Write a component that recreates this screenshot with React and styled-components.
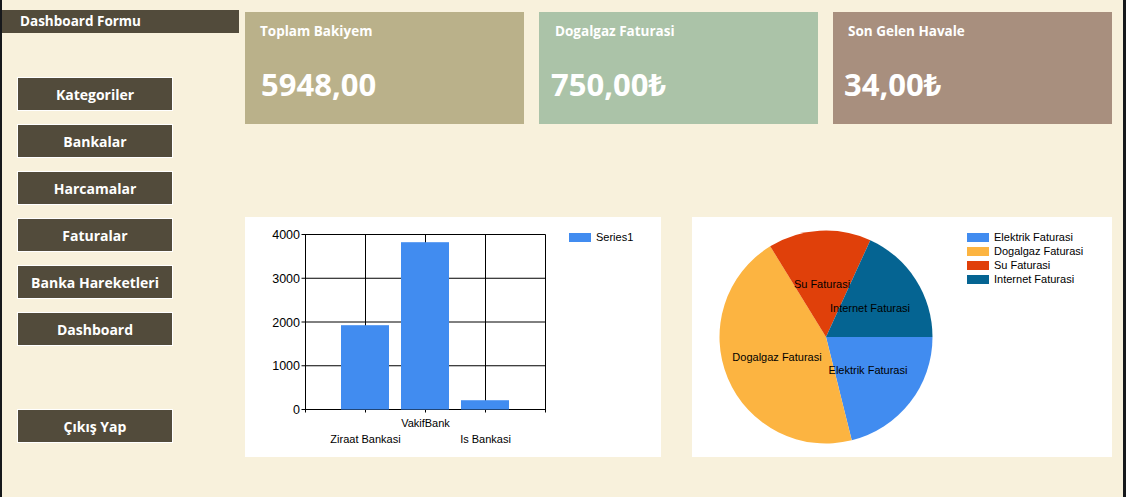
import React from "react";
import styled, { createGlobalStyle } from "styled-components";

const GlobalStyle = createGlobalStyle`
  body {
    margin: 0;
    background: #f8f1dc;
    font-family: "Open Sans", "Noto Sans", "DejaVu Sans", sans-serif;
  }
`;

const UI_FONT = `"Open Sans", "Noto Sans", "DejaVu Sans", sans-serif`;
const CHART_FONT = `"Liberation Sans", Arial, sans-serif`;

const BAR_BLUE = "#418cf0";

const Frame = styled.div`
  display: flex;
  width: 1126px;
  height: 497px;
  box-sizing: border-box;
  border-left: 2px solid #16181b;
  border-right: 3px solid #16181b;
  background: #f8f1dc;
  overflow: hidden;
`;

const Sidebar = styled.aside`
  width: 243px;
  flex-shrink: 0;
  padding-top: 10px;
  display: flex;
  flex-direction: column;
`;

const FormTitle = styled.div`
  width: 237px;
  height: 23px;
  box-sizing: border-box;
  padding-left: 18px;
  background: #524b3b;
  color: #fff;
  font: 700 13.5px/22px ${UI_FONT};
`;

const Menu = styled.nav`
  display: flex;
  flex-direction: column;
  align-items: flex-start;
  gap: 13px;
  margin: 44px 0 0 15px;
`;

const MenuButton = styled.button`
  width: 156px;
  height: 34px;
  margin: ${(p) => p.$extra || 0}px 0 0 0;
  border: 1px solid #fff;
  background: #524b3b;
  color: #fff;
  font: 700 14px ${UI_FONT};
  padding: 0;
  cursor: pointer;
`;

const Main = styled.main`
  flex: 1;
  padding-top: 12px;
  display: flex;
  flex-direction: column;
`;

const Cards = styled.section`
  display: grid;
  grid-template-columns: repeat(3, 279px);
  gap: 15px;
`;

const Card = styled.div`
  height: 112px;
  box-sizing: border-box;
  padding: 10px 0 0 15px;
  background: ${(p) => p.$bg};
  color: #fff;
`;

const CardTitle = styled.div`
  font: 700 13.5px/19px ${UI_FONT};
  padding-left: ${(p) => p.$shift || 0}px;
`;

const CardValue = styled.div`
  margin-top: 25px;
  margin-left: ${(p) => p.$shift || 0}px;
  font: 700 31px/37px ${UI_FONT};
`;

const Charts = styled.section`
  display: flex;
  gap: 31px;
  margin-top: 93px;
`;

const ChartPanel = styled.div`
  display: flex;
  width: ${(p) => p.$w}px;
  height: 240px;
  background: #fff;
  font-family: ${CHART_FONT};
`;

const Legend = styled.ul`
  list-style: none;
  margin: 0;
  padding: 13px 0 0 ${(p) => p.$pad}px;
  display: flex;
  flex-direction: column;
`;

const LegendItem = styled.li`
  display: flex;
  align-items: center;
  gap: 5px;
  height: 14px;
  font-size: 11px;
  color: #000;
  white-space: nowrap;
`;

const Swatch = styled.span`
  width: 22px;
  height: 9px;
  background: ${(p) => p.$color};
  flex-shrink: 0;
`;

const menu = [
  "Kategoriler",
  "Bankalar",
  "Harcamalar",
  "Faturalar",
  "Banka Hareketleri",
  "Dashboard",
];

const banks = [
  { name: "Ziraat Bankasi", value: 1927, row: 2 },
  { name: "VakifBank", value: 3824, row: 1 },
  { name: "Is Bankasi", value: 212, row: 2 },
];

const bills = [
  { name: "Elektrik Faturasi", color: "#418cf0", from: 0, to: 76, label: [176, 153] },
  { name: "Dogalgaz Faturasi", color: "#fcb441", from: 76, to: 238.4, label: [85, 140] },
  { name: "Su Faturasi", color: "#e0400a", from: 238.4, to: 294.6, label: [130, 67] },
  { name: "Internet Faturasi", color: "#056492", from: 294.6, to: 360, label: [178, 91] },
];

const BarChart = () => {
  const left = 60.5;
  const right = 300.5;
  const top = 17.5;
  const bottom = 192.5;
  const scale = (bottom - top) / 4000;
  const steps = [0, 1000, 2000, 3000, 4000];
  const cols = [120.5, 180.5, 240.5];
  return (
    <svg width="320" height="240" fontFamily={CHART_FONT}>
      {steps.map((s) => {
        const y = bottom - s * scale;
        return (
          <g key={s}>
            <line x1={left - 4} x2={right} y1={y} y2={y} stroke="#000" />
            <text x="55" y={y + 4.5} fontSize="12.5" textAnchor="end" fill="#000">
              {s}
            </text>
          </g>
        );
      })}
      {[left, ...cols, right].map((x) => (
        <line key={x} x1={x} x2={x} y1={top} y2={bottom + 3} stroke="#000" />
      ))}
      {banks.map((b, i) => {
        const h = b.value * scale;
        return (
          <rect key={b.name} x={cols[i] - 24.5} y={bottom - h} width="48" height={h} fill={BAR_BLUE} />
        );
      })}
      {banks.map((b, i) => (
        <text
          key={b.name}
          x={cols[i]}
          y={b.row === 1 ? 210 : 225.5}
          fontSize="11"
          textAnchor="middle"
          fill="#000"
        >
          {b.name}
        </text>
      ))}
    </svg>
  );
};

const polar = (cx, cy, r, deg) => {
  const a = (deg * Math.PI) / 180;
  return [cx + r * Math.cos(a), cy + r * Math.sin(a)];
};

const PieChart = () => {
  const cx = 134;
  const cy = 120;
  const r = 106.5;
  return (
    <svg width="270" height="240" fontFamily={CHART_FONT}>
      {bills.map((b) => {
        const [x1, y1] = polar(cx, cy, r, b.from);
        const [x2, y2] = polar(cx, cy, r, b.to);
        const large = b.to - b.from > 180 ? 1 : 0;
        return (
          <path
            key={b.name}
            d={`M${cx},${cy} L${x1},${y1} A${r},${r} 0 ${large} 1 ${x2},${y2} Z`}
            fill={b.color}
          />
        );
      })}
      {bills.map((b) => (
        <text key={b.name} x={b.label[0]} y={b.label[1] + 4} fontSize="11" textAnchor="middle" fill="#000">
          {b.name}
        </text>
      ))}
    </svg>
  );
};

const App = () => (
  <>
    <GlobalStyle />
    <Frame>
      <Sidebar>
        <FormTitle>Dashboard Formu</FormTitle>
        <Menu>
          {menu.map((m) => (
            <MenuButton key={m}>{m}</MenuButton>
          ))}
          <MenuButton $extra={50}>Çıkış Yap</MenuButton>
        </Menu>
      </Sidebar>
      <Main>
        <Cards>
          <Card $bg="#bab18a">
            <CardTitle>Toplam Bakiyem</CardTitle>
            <CardValue $shift={1}>5948,00</CardValue>
          </Card>
          <Card $bg="#abc3a8">
            <CardTitle $shift={1}>Dogalgaz Faturasi</CardTitle>
            <CardValue $shift={-3}>750,00₺</CardValue>
          </Card>
          <Card $bg="#a88f7e">
            <CardTitle>Son Gelen Havale</CardTitle>
            <CardValue $shift={-4}>34,00₺</CardValue>
          </Card>
        </Cards>
        <Charts>
          <ChartPanel $w={416}>
            <BarChart />
            <Legend $pad={4}>
              <LegendItem>
                <Swatch $color={BAR_BLUE} />
                Series1
              </LegendItem>
            </Legend>
          </ChartPanel>
          <ChartPanel $w={420}>
            <PieChart />
            <Legend $pad={5}>
              {bills.map((b) => (
                <LegendItem key={b.name}>
                  <Swatch $color={b.color} />
                  {b.name}
                </LegendItem>
              ))}
            </Legend>
          </ChartPanel>
        </Charts>
      </Main>
    </Frame>
  </>
);

export default App;
